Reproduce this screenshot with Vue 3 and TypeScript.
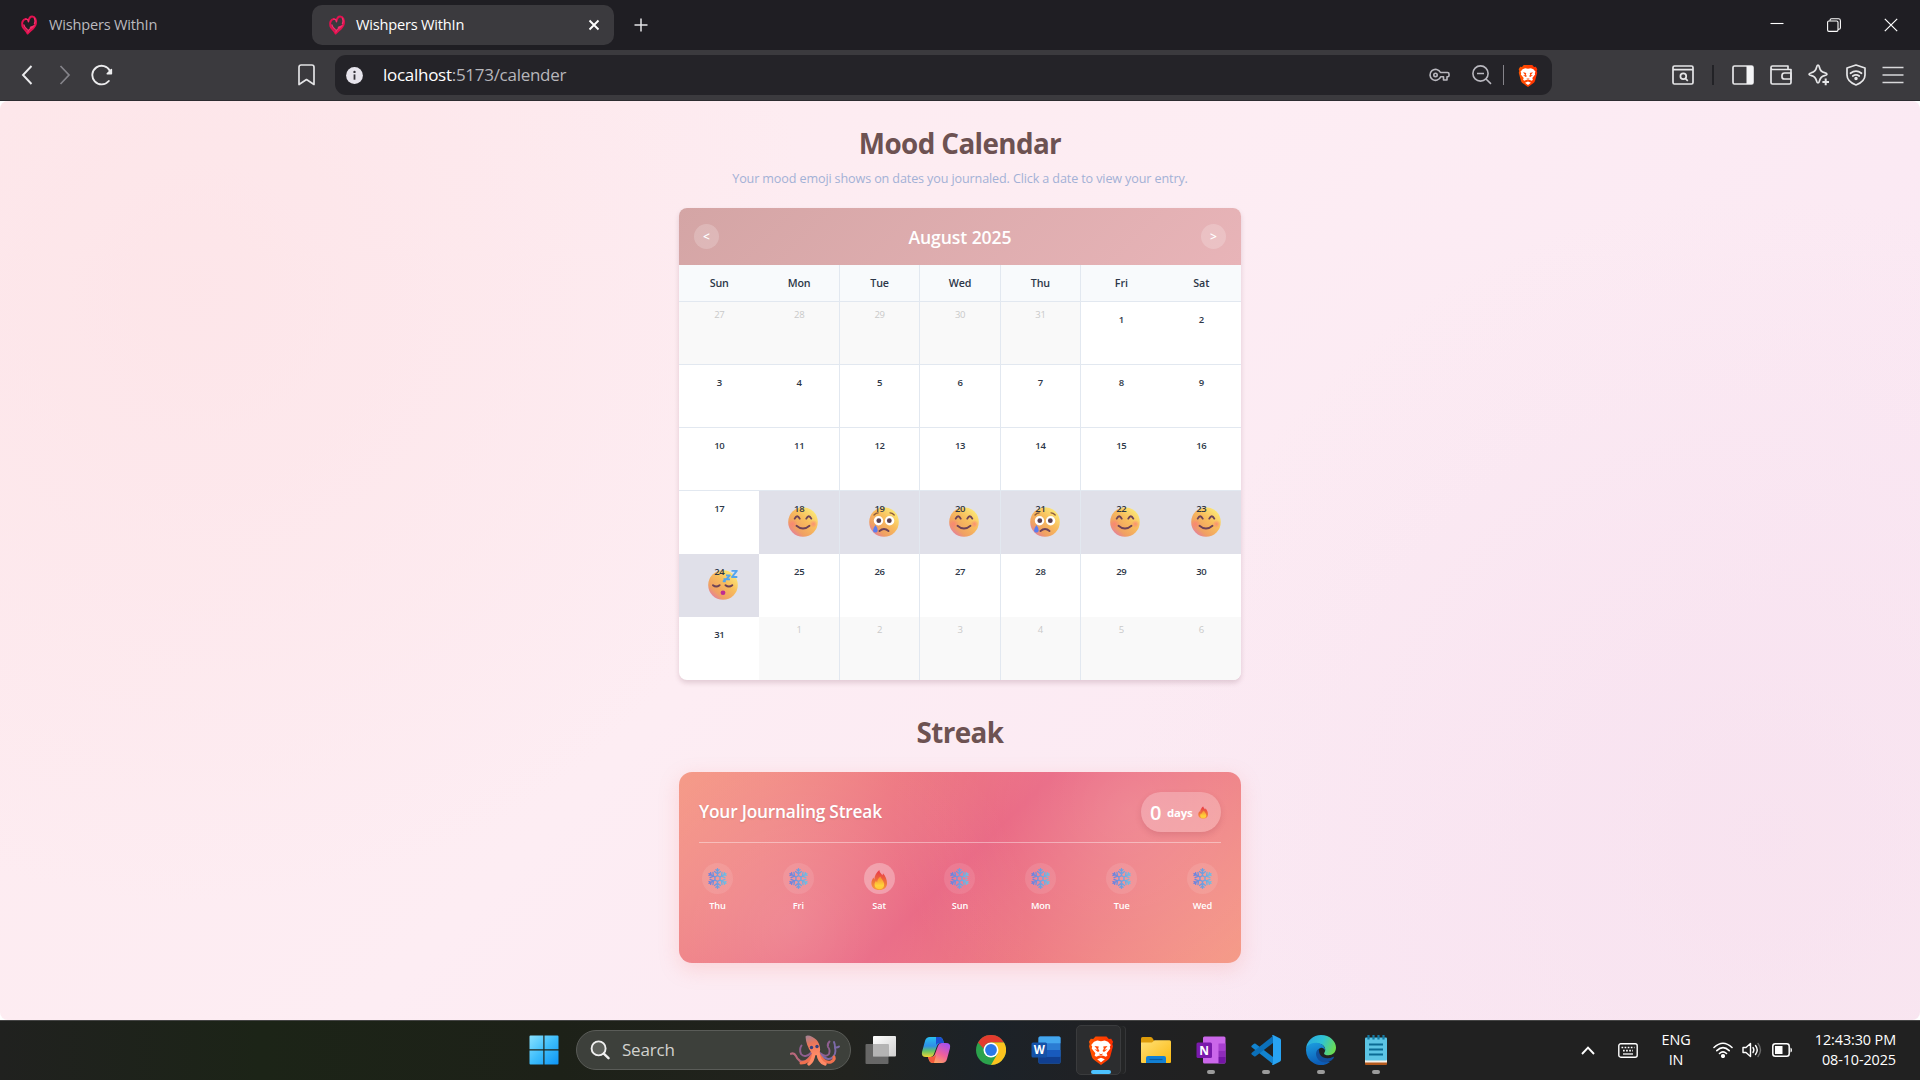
<script setup lang="ts">
interface Day {
  n: number
  muted?: boolean
  mood?: 'happy' | 'sad' | 'sleepy'
}

const weekdays: string[] = ['Sun', 'Mon', 'Tue', 'Wed', 'Thu', 'Fri', 'Sat']

const moods: Record<number, Day['mood']> = {
  18: 'happy',
  19: 'sad',
  20: 'happy',
  21: 'sad',
  22: 'happy',
  23: 'happy',
  24: 'sleepy',
}

const days: Day[] = [
  ...[27, 28, 29, 30, 31].map((n) => ({ n, muted: true })),
  ...Array.from({ length: 31 }, (_, i) => ({ n: i + 1, mood: moods[i + 1] })),
  ...[1, 2, 3, 4, 5, 6].map((n) => ({ n, muted: true })),
]

const weeks: Day[][] = Array.from({ length: 6 }, (_, i) => days.slice(i * 7, i * 7 + 7))

const streak: { label: string; lit: boolean }[] = [
  { label: 'Thu', lit: false },
  { label: 'Fri', lit: false },
  { label: 'Sat', lit: true },
  { label: 'Sun', lit: false },
  { label: 'Mon', lit: false },
  { label: 'Tue', lit: false },
  { label: 'Wed', lit: false },
]

const branches: number[] = [0, 60, 120, 180, 240, 300]
</script>

<template>
  <div class="screen">
    <svg class="defs" width="0" height="0" aria-hidden="true">
      <defs>
        <linearGradient id="face" x1="0.85" y1="0.1" x2="0.15" y2="0.9">
          <stop offset="0" stop-color="#fbe878" />
          <stop offset="0.4" stop-color="#f8bd5c" />
          <stop offset="0.8" stop-color="#f0a063" />
          <stop offset="1" stop-color="#e5809a" />
        </linearGradient>
        <radialGradient id="cheek">
          <stop offset="0" stop-color="#fb7d78" stop-opacity="0.75" />
          <stop offset="1" stop-color="#fb7d78" stop-opacity="0" />
        </radialGradient>
        <linearGradient id="frost" x1="0" y1="0" x2="1" y2="0">
          <stop offset="0.1" stop-color="#6f80dc" />
          <stop offset="0.9" stop-color="#70bde2" />
        </linearGradient>
        <linearGradient id="flameOuter" x1="0.5" y1="0" x2="0.4" y2="1">
          <stop offset="0" stop-color="#e8354a" />
          <stop offset="0.5" stop-color="#ee6a3c" />
          <stop offset="1" stop-color="#f79a3c" />
        </linearGradient>
        <linearGradient id="flameInner" x1="0.5" y1="0" x2="0.5" y2="1">
          <stop offset="0" stop-color="#f78a34" />
          <stop offset="0.7" stop-color="#ffd23a" />
          <stop offset="1" stop-color="#ffc63a" />
        </linearGradient>
        <linearGradient id="braveFill" x1="0" y1="0" x2="1" y2="0">
          <stop offset="0" stop-color="#ff5500" />
          <stop offset="1" stop-color="#ff2e00" />
        </linearGradient>
        <symbol id="heart" viewBox="0 0 18 22">
          <path d="M5.500 4.500C2 5 .8 8.500 1.700 12c.8 3.200 3.800 4 5.800 8.400 2.200-3.400 7.800-5.200 9-10.800.8-4.200-1-8-4-8-2.300 0-3.500 2-4 4.800" fill="none" stroke="#e3104f" stroke-width="2.200" stroke-linecap="round" stroke-linejoin="round" />
          <path d="M5.500 4.500c2-.2 2.900.9 2.900 3M7.600 18.600c2-4.600 5.200-3.600 7-7M3.400 11c.6 3 2.200 3.400 4 5.600M15 3.500c1 2 .8 4 0 6M10.500 13.500l2.500-1" fill="none" stroke="#f2306c" stroke-width="1.500" stroke-linecap="round" />
        </symbol>
        <symbol id="lion" viewBox="0 0 26 30">
          <path d="M7.500 1.400h11l2.300 2.500 2.400-.2 1.900 3-.8 2.300.7 2.300-2.800 10.500q-.6 2-2.400 3.300L13 30l-6.800-4.900q-1.800-1.300-2.400-3.300L1 11.300 1.700 9 .9 6.700l1.900-3 2.400.2z" fill="url(#braveFill)" />
          <path d="M13 6.300l3.700-.8 3.300 1.200 2.800 3.300-1 1.600.5 2-3.700 4.600.8 2.200-1.500 1.300-3.300-1.300-1.600.8-1.600-.8-3.300 1.300-1.500-1.300.8-2.200-3.700-4.600.5-2-1-1.600L6 6.700l3.300-1.200z" fill="#fff" />
          <path d="M13 22.800l3.800 1.500L13 27.300l-3.800-3z" fill="#fff" />
          <path d="M6.500 10.900l4.300.7-.6 2.200 1.300 2.200-1.500 1-3.500-2.800 3 .5zM19.500 10.900l-4.300.7.6 2.200-1.300 2.200 1.500 1 3.500-2.800-3 .5zM10.900 18.400l2.100.8 2.100-.8-2.100 2.800z" fill="#ff4a0c" />
        </symbol>
        <symbol id="flame" viewBox="0 0 16 20">
          <path d="M8.300 0c.3 2.500 2 3.700 3 5.200.5-.6.700-1.300.7-2 2.600 3 4 6.500 4 10 0 4-3 6.800-7.600 6.800C3.500 20 .4 17.300.4 13.200c0-2.500 1.100-4.500 2.300-5.800 0 1 .2 1.500.6 2C3.500 5.800 5.400 2.400 8.300 0z" fill="url(#flameOuter)" />
          <path d="M9.600 6.600c.6 2.900 3.600 4.400 3.600 8 0 3-2 4.700-4.900 4.700s-4.800-1.900-4.800-4.700c0-1.800 1-3.200 1.700-4 .1 1 .4 1.500.9 1.900.2-2.400 1.400-4.800 3.500-5.900z" fill="url(#flameInner)" />
        </symbol>
      </defs>
    </svg>

    <div class="tabstrip">
      <div class="tab"><svg width="18" height="20"><use href="#heart" /></svg><span>Wishpers WithIn</span></div>
      <div class="tab active">
        <svg width="18" height="20"><use href="#heart" /></svg><span>Wishpers WithIn</span>
        <svg class="tab-close" width="12" height="12" viewBox="0 0 12 12"><path d="M1.500 1.500l9 9M10.500 1.500l-9 9" stroke="#fff" stroke-width="1.900" /></svg>
      </div>
      <svg class="plus" width="14" height="14" viewBox="0 0 14 14"><path d="M7 .5v13M.5 7h13" stroke="#e4e4e6" stroke-width="1.500" /></svg>
      <div class="window-buttons">
        <svg width="14" height="14" viewBox="0 0 14 14"><path d="M.5 5.500h13" stroke="#fff" stroke-width="1.100" /></svg>
        <svg width="14" height="14" viewBox="0 0 14 14" fill="none" stroke="#fff" stroke-width="1.100"><rect x=".6" y="3" width="10.400" height="10.400" rx="1.300" /><path d="M3 2.800V2.200Q3 .8 4.500.8h7q1.900 0 1.900 1.900v7q0 1.500-1.500 1.500H11" /></svg>
        <svg width="14" height="14" viewBox="0 0 14 14"><path d="M.8.8l12.400 12.400M13.200.8L.8 13.200" stroke="#fff" stroke-width="1.200" /></svg>
      </div>
    </div>

    <div class="toolbar">
      <div class="nav">
        <svg width="12" height="20" viewBox="0 0 12 20"><path d="M10.500 1L2 10l8.500 9" fill="none" stroke="#ececee" stroke-width="1.900" /></svg>
        <svg width="12" height="20" viewBox="0 0 12 20"><path d="M1.500 1L10 10l-8.500 9" fill="none" stroke="#85848a" stroke-width="1.700" /></svg>
        <svg width="22" height="22" viewBox="0 0 22 22"><path d="M17.800 17A9.300 9.300 0 1 1 19 7" fill="none" stroke="#ececee" stroke-width="1.900" stroke-linecap="round" /><path d="M20.400 5.500v4.200h-4.200z" fill="#ececee" stroke="#ececee" stroke-width="1.500" stroke-linejoin="round" /></svg>
      </div>
      <svg class="bookmark" width="17" height="22" viewBox="0 0 17 22"><path d="M3.200 1h10.600Q16 1 16 3.200V20.500L8.500 15.500 1 20.500V3.200Q1 1 3.200 1z" fill="none" stroke="#e2e2e4" stroke-width="1.700" stroke-linejoin="round" /></svg>
      <div class="address">
        <svg width="17" height="17" viewBox="0 0 17 17"><circle cx="8.500" cy="8.500" r="8.400" fill="#e6e4ec" /><circle cx="8.500" cy="4.900" r="1.200" fill="#35343a" /><path d="M8.500 7.400v5.300" stroke="#35343a" stroke-width="1.800" /></svg>
        <span class="url"><b>localhost</b>:5173/calender</span>
        <div class="address-icons">
          <svg width="21" height="14" viewBox="0 0 21 14" fill="none" stroke="#b9b8bf" stroke-width="1.600" stroke-linejoin="round"><path d="M11.500 4.500H18.500Q20 4.500 20 6v1.500q0 1.200-1.200 1.200H18V12h-3.500V8.700H11.700A5.500 5.500 0 1 1 11.500 4.500z" /><circle cx="6.500" cy="6.900" r="1.700" /></svg>
          <svg width="20" height="20" viewBox="0 0 20 20" fill="none" stroke="#b9b8bf" stroke-width="1.600"><circle cx="8.500" cy="8.500" r="7.600" /><path d="M5 8.500h7M14 14l5 4.800" /></svg>
          <i class="bar"></i>
          <svg width="20" height="23" viewBox="0 0 26 30" preserveAspectRatio="none"><use href="#lion" width="26" height="30" /></svg>
        </div>
      </div>
      <div class="tools">
        <svg width="22" height="20" viewBox="0 0 22 20" fill="none" stroke="#e6e6e8" stroke-width="1.700"><rect x="1" y="1" width="20" height="18" rx="1.500" /><path d="M1 4.600h20M13.500 13.600l2.300 2.200" /><circle cx="11.300" cy="11.200" r="2.900" /></svg>
        <i class="sep"></i>
        <svg width="22" height="20" viewBox="0 0 22 20"><rect x="1" y="1" width="20" height="18" rx="1.500" fill="none" stroke="#e6e6e8" stroke-width="1.700" /><path d="M14.500 1H20q1 0 1 1v16q0 1-1 1h-5.500z" fill="#f4f4f6" /></svg>
        <svg width="22" height="20" viewBox="0 0 22 20" fill="none" stroke="#e6e6e8" stroke-width="1.700" stroke-linejoin="round"><path d="M18 4.500V1H2.500Q1 1 1 2.500v15Q1 19 2.500 19h17q1.500 0 1.500-1.500V4.500H2.500Q1 4.500 1 2.500" /><path d="M21 8h-6.500Q12 8 12 10.500V12q0 2 2.500 2H21z" /></svg>
        <svg width="22" height="22" viewBox="0 0 22 22" fill="none" stroke="#e6e6e8" stroke-width="1.700" stroke-linejoin="round"><path d="M10 1.200Q11 1.200 11.500 3.500 12.500 7.800 16.500 8.700 19 9.300 19 10.200T16.500 11.600Q12.500 12.600 11.500 16.800 11 19 10 19T8.500 16.800Q7.500 12.600 3.500 11.600 1 11 1 10.200T3.500 8.700Q7.500 7.800 8.500 3.500 9 1.200 10 1.200z" /><path d="M17.500 14v8M13.500 18h8" stroke="#3b3a3e" stroke-width="4.500" /><path d="M17.700 14.600v6.600M14.400 17.900H21" stroke-width="2" /></svg>
        <svg width="20" height="22" viewBox="0 0 20 22" fill="none" stroke="#e6e6e8" stroke-width="1.700" stroke-linecap="round" stroke-linejoin="round"><path d="M10 1l9 3v7q0 6.500-9 10Q1 17.500 1 11V4z" /><path d="M4.500 9.300q5.500-4.200 11 0M6.800 12q3.200-2.300 6.400 0" /><circle cx="10" cy="14.500" r=".9" fill="#e6e6e8" /></svg>
        <svg width="22" height="18" viewBox="0 0 22 18"><path d="M.5 1.500h21M.5 9h21M.5 16.500h21" stroke="#d8d8da" stroke-width="1.700" /></svg>
      </div>
    </div>

    <div class="viewport">
      <main class="page">
        <h1>Mood Calendar</h1>
        <p class="hint">Your mood emoji shows on dates you journaled. Click a date to view your entry.</p>

        <section class="calendar">
          <header>
            <button>&lt;</button>
            <h2>August 2025</h2>
            <button>&gt;</button>
          </header>
          <div class="row head">
            <div v-for="d in weekdays" :key="d" class="cell">{{ d }}</div>
          </div>
          <div v-for="(week, w) in weeks" :key="w" class="row" :class="{ lined: w < 3 }">
            <div v-for="(day, i) in week" :key="i" class="cell" :class="{ muted: day.muted, marked: day.mood }">
              <svg v-if="day.mood" class="mood" width="30" height="30" viewBox="0 0 30 30">
                <circle cx="15" cy="15" r="14.800" fill="url(#face)" />
                <g v-if="day.mood === 'happy'">
                  <circle cx="4.500" cy="17" r="5" fill="url(#cheek)" /><circle cx="25.500" cy="17" r="4" fill="url(#cheek)" />
                  <path d="M6.700 11.600q2.500-4.700 5 0M18.300 11.600q2.500-4.700 5 0M8.500 18.800q6.500 5.600 13 0" fill="none" stroke="#6d4257" stroke-width="1.900" stroke-linecap="round" />
                </g>
                <g v-else-if="day.mood === 'sad'">
                  <circle cx="9.500" cy="13.700" r="4.700" fill="#fff" /><circle cx="20.600" cy="13.700" r="4.700" fill="#fff" />
                  <circle cx="9.800" cy="13.700" r="2.400" fill="#5a3f4d" /><circle cx="20.300" cy="13.700" r="2.400" fill="#5a3f4d" />
                  <path d="M5 8q2-2.200 4.200-2.200M21 5.800q2.200 0 4.200 2.200" fill="none" stroke="#8b5a3c" stroke-width="1.300" stroke-linecap="round" />
                  <path d="M10.500 24q4.500-4 9 0" fill="none" stroke="#6d4257" stroke-width="1.900" stroke-linecap="round" />
                  <path d="M6.500 18q2.600 3.500 2.200 5.700a2.400 2.400 0 0 1-4.700 0Q4 21.300 6.500 18z" fill="#5b7df0" />
                </g>
                <g v-else>
                  <path d="M5 15.200q3.200 2.800 6.600 0M17.500 15.200q3.400 2.800 6.800 0" fill="none" stroke="#6d4257" stroke-width="1.900" stroke-linecap="round" />
                  <ellipse cx="15" cy="22.800" rx="2.400" ry="2.200" fill="#bf2c93" />
                  <path d="M23.500.8h5.300l-4.800 6.200h5.300M18 5.400h3.800l-3.600 4h3.800M15.500 9.300h2.300l-2.200 2h2.200" fill="none" stroke="#53a5ee" stroke-width="1.900" stroke-linejoin="round" />
                </g>
              </svg>
              <span>{{ day.n }}</span>
            </div>
          </div>
        </section>

        <h1 class="streak-heading">Streak</h1>

        <section class="streak">
          <div class="streak-top">
            <h3>Your Journaling Streak</h3>
            <div class="badge"><b>0</b><span>days</span><svg width="10" height="13" viewBox="0 0 16 20"><use href="#flame" width="16" height="20" /></svg></div>
          </div>
          <div class="streak-days">
            <div v-for="s in streak" :key="s.label" class="streak-day">
              <div class="disc" :class="{ lit: s.lit }">
                <svg v-if="s.lit" width="16" height="20" viewBox="0 0 16 20"><use href="#flame" width="16" height="20" /></svg>
                <svg v-else width="21" height="21" viewBox="0 0 30 30">
                  <defs>
                    <linearGradient :id="`ice-${s.label}`" x1="0" y1="0" x2="30" y2="0" gradientUnits="userSpaceOnUse">
                      <stop offset="0.1" stop-color="#6f80dc" />
                      <stop offset="0.9" stop-color="#70bde2" />
                    </linearGradient>
                    <mask :id="`flake-${s.label}`" maskUnits="userSpaceOnUse" x="0" y="0" width="30" height="30">
                      <g fill="none" stroke="#fff" stroke-width="1.900" stroke-linecap="round">
                        <path d="M15 10.800l3.600 2.100v4.200L15 19.200l-3.600-2.100v-4.200z" />
                        <path v-for="a in branches" :key="a" :transform="`rotate(${a} 15 15)`" d="M15 10.500V1M15 8.500l-4.200-3.400M15 8.500l4.200-3.400M15 4.500l-2.300-2.200M15 4.500l2.300-2.200" />
                      </g>
                    </mask>
                  </defs>
                  <rect width="30" height="30" :fill="`url(#ice-${s.label})`" :mask="`url(#flake-${s.label})`" />
                </svg>
              </div>
              <span>{{ s.label }}</span>
            </div>
          </div>
        </section>
      </main>
    </div>

    <footer class="taskbar">
      <svg class="start" width="30" height="30" viewBox="0 0 30 30">
        <defs><linearGradient id="win" x1="0" y1="0" x2="30" y2="30" gradientUnits="userSpaceOnUse"><stop offset="0" stop-color="#8ce3ff" /><stop offset="0.5" stop-color="#3dbdfb" /><stop offset="1" stop-color="#0b93f5" /></linearGradient></defs>
        <path d="M.5 1.500Q.5.5 1.500.5H14.300V14.300H.5zM15.500.5h13q1 0 1 1V14.300h-14zM.5 15.500h13.800v14H1.500q-1 0-1-1zM15.500 15.500h14v13q0 1-1 1h-13z" fill="url(#win)" />
      </svg>
      <div class="search">
        <svg width="20" height="20" viewBox="0 0 20 20"><circle cx="8.600" cy="8.400" r="7" fill="#5d605b" stroke="#f0f0f0" stroke-width="1.900" /><path d="M13.800 13.600l4.700 4.600" stroke="#f0f0f0" stroke-width="2.400" stroke-linecap="round" /></svg>
        <span>Search</span>
        <svg class="octopus" width="50" height="31" viewBox="0 0 50 31">
          <defs><linearGradient id="octo" x1="0.3" y1="0" x2="0.6" y2="1"><stop offset="0" stop-color="#a8808f" /><stop offset="0.4" stop-color="#e8765a" /><stop offset="1" stop-color="#ff8a66" /></linearGradient></defs>
          <g fill="none" stroke-linecap="round">
            <path d="M22 19Q16 29 10 26 7 24 6 21 4 17.500 1 18.800" stroke="#b8687c" stroke-width="2.200" />
            <path d="M22 17Q15 24 11 19 9 14 11.500 10.500" stroke="#8f5f90" stroke-width="2" />
            <path d="M30 18q6 5 9 1 1.500-4-1-7-1-3 1.500-5.500" stroke="#8f5f90" stroke-width="1.900" />
            <path d="M30 19q8 8 13 3 3.500-4 2-9 0-4-1-6M46 12.500q2 0 3-1" stroke="#7c6aa8" stroke-width="1.900" />
            <path d="M24 18q-5 10-13 10M28 18q6 11 13 9 4-2 3-5" stroke="#f0704f" stroke-width="3" />
            <path d="M24 18q-1 8-5 11M28 18q1 9 7 11" stroke="#ff8a66" stroke-width="3.400" />
          </g>
          <path d="M15.500 1.500q2-2 7 .5 5 2.500 6.500 7 2.500 7-.5 10.500-4 2-7-1.500Q16 10 15.500 1.500z" fill="url(#octo)" />
          <circle cx="21.500" cy="12.500" r="1.700" fill="#35407e" /><circle cx="27" cy="11.500" r="1.700" fill="#35407e" />
        </svg>
      </div>
      <div class="apps">
        <div class="app"><svg width="31" height="30" viewBox="0 0 31 30"><defs><linearGradient id="tv" x1="0" y1="0" x2="1" y2="1"><stop offset="0" stop-color="#fff" /><stop offset="1" stop-color="#cfcfcf" /></linearGradient></defs><rect x="8" y="1" width="23" height="20.500" rx="1" fill="url(#tv)" /><rect x=".5" y="9" width="23" height="20" rx="1" fill="#767676" fill-opacity="0.82" /><path d="M8 9h15.500v12.500H8z" fill="#b4b4b4" /></svg></div>
        <div class="app"><svg width="30" height="28" viewBox="0 0 30 28">
          <defs><linearGradient id="cpA" x1="0" y1="0" x2="0" y2="1"><stop offset="0" stop-color="#2ac0f0" /><stop offset="0.45" stop-color="#2e8ee8" /><stop offset="0.7" stop-color="#63c265" /><stop offset="1" stop-color="#f3d534" /></linearGradient><linearGradient id="cpB" x1="0.8" y1="0" x2="0.2" y2="1"><stop offset="0" stop-color="#a64ff0" /><stop offset="0.5" stop-color="#f0609a" /><stop offset="1" stop-color="#ffb057" /></linearGradient></defs>
          <path d="M9 1h9q3 0 4 3l1 3h-3q-3 0-4 3l-3 8q-1 3-4 3H5q-5 0-4-5L4 5q1-4 5-4z" fill="url(#cpA)" /><path d="M15 1h3q3 0 4 3l1 3h-4q-3 0-4 2z" fill="#1c4fd4" />
          <path d="M21 27h-9q-3 0-4-3l-1-3h3q3 0 4-3l3-8q1-3 4-3h4q5 0 4 5l-3 11q-1 4-5 4z" fill="url(#cpB)" /><path d="M13 27h-1q-3 0-4-3l-1-3h4q2 0 4-2z" fill="#f35a3c" />
        </svg></div>
        <div class="app"><svg width="30" height="30" viewBox="0 0 30 30">
          <circle cx="15" cy="15" r="15" fill="#2ba24c" />
          <path d="M2 7.500A15 15 0 0 1 28 7.500H15q-6 0-7.500 6z" fill="#e33b2e" /><path d="M15 7.500H28A15 15 0 0 1 15 30L21.500 18.700Q24 12 15 7.500z" fill="#fcc31e" />
          <circle cx="15" cy="15" r="7.500" fill="#fff" /><circle cx="15" cy="15" r="5.900" fill="#2a78e8" />
        </svg></div>
        <div class="app"><svg width="30" height="28" viewBox="0 0 30 28"><rect x="7.500" y=".5" width="22" height="27" rx="1.500" fill="#2b7cd3" /><path d="M7.500 2Q7.500.5 9 .5h19q1.500 0 1.500 1.500v5.300h-22z" fill="#43a6ee" /><path d="M7.500 14h22v6.700h-22z" fill="#185abd" /><path d="M7.500 20.700h22V26q0 1.500-1.500 1.500H9q-1.500 0-1.500-1.500z" fill="#103f91" /><rect x=".5" y="6.500" width="15.500" height="15" rx="1.500" fill="#1552a8" /><text x="8.200" y="18.300" text-anchor="middle" font-family="Open Sans, sans-serif" font-weight="700" font-size="11.500" fill="#fff">W</text></svg></div>
        <div class="app focused"><svg width="26" height="30"><use href="#lion" /></svg><i class="line"></i></div>
        <div class="app"><svg width="30" height="28" viewBox="0 0 30 28"><defs><linearGradient id="fold" x1="0" y1="0" x2="1" y2="1"><stop offset="0" stop-color="#ffe077" /><stop offset="1" stop-color="#fbb90f" /></linearGradient></defs><path d="M0 2.500Q0 1 1.500 1h8q1 0 1.700.8L13 4.500v6H0z" fill="#dd9b0a" /><path d="M0 6.500h11l2.500-2.200H28.500q1.500 0 1.500 1.500V26q0 1-1 1H1q-1 0-1-1z" fill="url(#fold)" /><path d="M5 27v-5q0-2 2-2h16q2 0 2 2v5z" fill="#1280d4" /><path d="M8.500 23.500h13" stroke="#0b5c9f" stroke-width="1.200" /></svg></div>
        <div class="app"><svg width="30" height="28" viewBox="0 0 30 28"><rect x="7" y=".5" width="22.500" height="27" rx="1.500" fill="#cb67ea" /><path d="M22.500 7.500h7v7h-7z" fill="#a83fd0" /><path d="M22.500 14.500h7v6.500h-7z" fill="#8f2cba" /><path d="M22.500 21h7v5q0 1.500-1.500 1.500h-5.500z" fill="#7516a6" /><rect x=".5" y="6.500" width="15.500" height="15.500" rx="1.500" fill="#7a1aac" /><text x="8.200" y="18.500" text-anchor="middle" font-family="Open Sans, sans-serif" font-weight="700" font-size="12" fill="#fff">N</text></svg><i class="dot"></i></div>
        <div class="app"><svg width="30" height="30" viewBox="0 0 30 30"><path d="M.8 10.500L3 8.700q.8-.6 1.600 0L22 22v7L.8 12.300q-.9-.8 0-1.800z" fill="#1284d0" /><path d="M.8 19.500L3 21.300q.8.600 1.600 0L22 8V1L.8 17.700q-.9.8 0 1.800z" fill="#0b70ba" /><path d="M21 .3q.8-.5 1.700 0l6 2.900Q30 3.800 30 5.200v19.600q0 1.400-1.300 2l-6 2.900q-.9.500-1.700 0l1-1.700V2z" fill="#28a3f2" /></svg><i class="dot"></i></div>
        <div class="app"><svg width="30" height="30" viewBox="0 0 30 30"><defs><linearGradient id="edA" x1="0" y1="0.3" x2="1" y2="0.6"><stop offset="0" stop-color="#2aa9e0" /><stop offset="0.5" stop-color="#2fc3d4" /><stop offset="1" stop-color="#6ddd4e" /></linearGradient><linearGradient id="edB" x1="0" y1="0" x2="0.3" y2="1"><stop offset="0" stop-color="#1c9fe0" /><stop offset="1" stop-color="#0c5db8" /></linearGradient></defs><path d="M0 14A15 15 0 0 1 15 0C24 0 30 6.500 30 12.500c0 5-3.500 7.700-7.500 7.700-3.500 0-5.300-1.200-4-2.800C21 13 17 8.500 11.500 8.500 5.500 8.500 1 11.500 0 14z" fill="url(#edA)" /><path d="M0 15C0 10.500 5 7.500 10.500 7.800 16 8 19.500 12 19 15.500c-.7-2-2.500-3-4.500-2.500-4 1.500-4.500 7-1 10.500 3 3 7 4 10.500 3.500A15 15 0 0 1 0 15z" fill="url(#edB)" /><path d="M12.500 13.800C8 17 10 25 16 27c5 1.500 10-1 11.800-4.300.3-.8-.3-1-.9-.7-5 2.500-11 1.200-13-2.800-1-2-.8-4.200-1.400-5.400z" fill="#124f9c" /></svg><i class="dot"></i></div>
        <div class="app"><svg width="22" height="30" viewBox="0 0 22 30"><rect x="0" y="25" width="22" height="5" rx="1" fill="#b4591c" /><rect x="0" y="24" width="22" height="3.500" fill="#f2f0ea" /><rect x="0" y="2.500" width="22" height="23" rx="1" fill="#5cc4e4" /><path d="M4 9.500h14M4 14.500h14M4 19.500h14" stroke="#0b6b94" stroke-width="1.800" /><path d="M3.500 0v4.500M8.500 0v4.500M13.500 0v4.500M18.500 0v4.500" stroke="#147aa3" stroke-width="2.200" /></svg><i class="dot"></i></div>
      </div>
      <div class="tray">
        <svg class="chev" width="14" height="9" viewBox="0 0 14 9"><path d="M1 8l6-6.300L13 8" fill="none" stroke="#fff" stroke-width="1.900" /></svg>
        <svg class="keys" width="20" height="15" viewBox="0 0 20 15"><rect x=".8" y=".8" width="18.400" height="13.400" rx="2" fill="none" stroke="#fff" stroke-width="1.400" /><path d="M3.500 4.500h13M5 7.700h10" stroke="#fff" stroke-width="1.700" stroke-dasharray="1.700 1.400" /><path d="M5 11h10" stroke="#fff" stroke-width="1.300" /></svg>
        <div class="lang"><span>ENG</span><span>IN</span></div>
        <div class="status">
          <svg width="20" height="16" viewBox="0 0 20 16" fill="none" stroke="#fff" stroke-width="1.600" stroke-linecap="round"><path d="M1 5.500q9-8.500 18 0M3.800 8.600q6.200-5.800 12.400 0M6.500 11.500q3.500-3.200 7 0" /><circle cx="10" cy="14" r="1.300" fill="#fff" /></svg>
          <svg width="21" height="16" viewBox="0 0 21 16" fill="none" stroke="#fff" stroke-width="1.400" stroke-linecap="round" stroke-linejoin="round"><path d="M1 5.500h3L8.500 1.500v13L4 10.500H1z" /><path d="M11 5.500q1.800 2.500 0 5M13.500 3.500q3.500 4.500 0 9" /><path d="M16 1.500q5 6.500 0 13" stroke="#686868" /></svg>
          <svg width="21" height="14" viewBox="0 0 21 14"><rect x=".8" y=".8" width="16.400" height="12.400" rx="2.500" fill="none" stroke="#fff" stroke-width="1.500" /><rect x="3" y="3" width="7.500" height="8" fill="#fff" /><path d="M18.500 4.500q1.500.5 1.500 2.500t-1.500 2.500z" fill="#fff" /></svg>
        </div>
        <div class="clock"><span>12:43:30 PM</span><span>08-10-2025</span></div>
      </div>
    </footer>
  </div>
</template>

<style>
body {
  margin: 0;
  overflow: hidden;
}
</style>

<style scoped>
* {
  box-sizing: border-box;
}
.screen {
  width: 1920px;
  height: 1080px;
  display: flex;
  flex-direction: column;
  overflow: hidden;
  background: #fff;
  font-family: 'Open Sans', 'Noto Sans', sans-serif;
}
.defs {
  position: absolute;
}
svg {
  display: block;
  flex: none;
}

/* browser chrome */
.tabstrip {
  height: 50px;
  flex: none;
  display: flex;
  align-items: center;
  background: #1f1e23;
}
.tab {
  width: 312px;
  height: 40px;
  display: flex;
  align-items: center;
  padding-left: 20px;
  gap: 11px;
  color: #bbbabf;
  font-size: 14.6px;
  letter-spacing: -0.2px;
  white-space: nowrap;
}
.tab span {
  padding-bottom: 2px;
}
.tab.active {
  width: 302px;
  padding-left: 16px;
  padding-right: 14px;
  gap: 10px;
  border-radius: 10px;
  background: #3b3a3e;
  color: #fff;
}
.tab-close {
  margin-left: auto;
}
.plus {
  margin-left: 20px;
}
.window-buttons {
  margin-left: auto;
  display: flex;
  gap: 43px;
  padding-right: 22px;
}
.toolbar {
  height: 51px;
  flex: none;
  display: flex;
  align-items: center;
  background: #3b3a3e;
  border-bottom: 1px solid #2c2c30;
}
.nav {
  display: flex;
  align-items: center;
  gap: 26px;
  padding-left: 21px;
  width: 298px;
}
.nav svg:last-child {
  margin-left: -6px;
}
.bookmark {
  margin-right: 20px;
}
.address {
  width: 1217px;
  height: 40px;
  display: flex;
  align-items: center;
  padding: 0 14px 0 11px;
  border-radius: 11px;
  background: #242328;
}
.url {
  margin-left: 20px;
  padding-bottom: 2px;
  font-size: 17px;
  color: #b7b6bb;
  letter-spacing: -0.28px;
}
.url b {
  font-weight: 400;
  color: #fff;
}
.address-icons {
  margin-left: auto;
  display: flex;
  align-items: center;
}
.address-icons svg:nth-child(2) {
  margin-left: 22px;
}
.bar {
  width: 1px;
  height: 20px;
  margin: 0 14px 0 11px;
  background: #85848a;
}
.tools {
  display: flex;
  align-items: center;
  margin-left: auto;
  gap: 16px;
  padding-right: 16px;
}
.sep {
  width: 2px;
  height: 20px;
  margin: 0 2px;
  background: #222226;
}

/* page */
.viewport {
  height: 919px;
  flex: none;
  border-radius: 8px;
  background:
    radial-gradient(circle 620px at 10% 20%, rgba(253, 222, 224, 0.42), transparent),
    radial-gradient(circle 640px at 92% 80%, rgba(245, 220, 236, 0.45), transparent),
    linear-gradient(135deg, #fdeaee 0%, #fdedf3 45%, #fae8f3 80%, #fae9f2 100%);
}
.page {
  width: 562px;
  margin: 0 auto;
  display: flex;
  flex-direction: column;
}
h1 {
  height: 40px;
  line-height: 40px;
  margin: 22px 0 0;
  text-align: center;
  font-size: 27.8px;
  letter-spacing: -0.6px;
  font-weight: 700;
  color: #6d5252;
}
.hint {
  margin: 5px 0 19px;
  height: 21px;
  line-height: 21px;
  text-align: center;
  font-size: 12.6px;
  letter-spacing: -0.13px;
  color: #a3b1d6;
  white-space: nowrap;
}
.calendar {
  border-radius: 8px;
  overflow: hidden;
  background: #fff;
  box-shadow: 0 3px 5px rgba(120, 70, 90, 0.2);
}
.calendar header {
  height: 57px;
  display: flex;
  align-items: center;
  justify-content: space-between;
  padding: 0 15px;
  background: linear-gradient(135deg, #d4a5a5, #e8b4b8);
}
.calendar button {
  width: 25px;
  height: 25px;
  padding: 0;
  border: 0;
  border-radius: 50%;
  background: rgba(255, 255, 255, 0.2);
  color: #fff;
  font: 600 12px 'Open Sans', sans-serif;
}
h2 {
  margin: 0;
  font-size: 17.6px;
  letter-spacing: -0.1px;
  font-weight: 600;
  color: #fff;
}
.row {
  display: grid;
  grid-template-columns: repeat(6, 80.43px) 1fr;
  height: 63px;
}
.row.head {
  height: 37px;
  background: #f8fafc;
  border-bottom: 1px solid #e2e8f0;
}
.row.head .cell {
  align-items: center;
  padding: 0;
  font-size: 10.7px;
  letter-spacing: -0.1px;
}
.row.lined {
  border-bottom: 1px solid #e2e8f0;
}
.cell {
  position: relative;
  display: flex;
  justify-content: center;
  align-items: flex-start;
  padding-top: 11px;
  line-height: 14px;
  font-size: 9.5px;
  letter-spacing: -0.35px;
  font-weight: 600;
  color: #2d3748;
}
.cell:nth-child(n + 2):nth-child(-n + 5) {
  border-right: 1px solid #e2e8f0;
}
.cell.muted {
  padding-top: 6px;
  background: #f9f9f9;
  color: #c9c9c9;
  font-weight: 400;
}
.cell.marked {
  background: #e0e0e9;
}
.cell span {
  position: relative;
}
.mood {
  position: absolute;
  left: 29px;
  top: 16px;
}
.streak-heading {
  margin: 32px 0 20px;
}
.streak {
  height: 191px;
  padding: 20px;
  border-radius: 13px;
  box-shadow: 0 6px 20px rgba(247, 140, 130, 0.25);
  background:
    radial-gradient(circle at 20% 80%, rgba(255, 255, 255, 0.17) 0%, transparent 50%),
    radial-gradient(circle at 80% 20%, rgba(255, 255, 255, 0.17) 0%, transparent 50%),
    linear-gradient(135deg, #f59884 0%, #e85f7c 50%, #f59884 100%);
}
.streak-top {
  height: 51px;
  display: flex;
  justify-content: space-between;
  align-items: flex-start;
  border-bottom: 1px solid rgba(255, 255, 255, 0.4);
}
h3 {
  margin: 0;
  line-height: 39px;
  font-size: 17.3px;
  letter-spacing: -0.2px;
  font-weight: 600;
  color: #fff;
  text-shadow: 0 1px 2px rgba(0, 0, 0, 0.12);
}
.badge {
  width: 80px;
  height: 40px;
  display: flex;
  align-items: center;
  padding-left: 9px;
  border-radius: 20px;
  background: rgba(255, 255, 255, 0.23);
  box-shadow: 0 3px 6px rgba(120, 30, 50, 0.15);
  color: #fff;
}
.badge b {
  width: 12px;
  font-size: 20px;
  font-weight: 600;
}
.badge span {
  margin: 0 6px 0 5px;
  font-size: 11.4px;
  letter-spacing: -0.2px;
  font-weight: 700;
}
.streak-days {
  display: flex;
  justify-content: space-between;
  padding-top: 20px;
}
.streak-day {
  width: 37px;
  display: flex;
  flex-direction: column;
  align-items: center;
  color: #fff;
  font-size: 9.2px;
  letter-spacing: -0.1px;
  font-weight: 600;
  line-height: 12px;
}
.streak-day span {
  margin-top: 6px;
}
.disc {
  width: 31px;
  height: 31px;
  border-radius: 50%;
  display: flex;
  align-items: center;
  justify-content: center;
  background: rgba(255, 255, 255, 0.1);
}
.disc.lit {
  background: rgba(255, 255, 255, 0.3);
}
.disc.lit svg {
  margin-top: 3px;
}

/* taskbar */
.taskbar {
  height: 60px;
  flex: none;
  display: flex;
  align-items: center;
  padding-bottom: 1px;
  border-top: 1px solid #454545;
  background: linear-gradient(90deg, #20211f 0, #1c2417 260px, #1d2118 560px, #22231f 850px, #1c2228 990px, #202124 1100px, #212121 1200px);
}
.start {
  margin-left: 529px;
}
.search {
  width: 275px;
  height: 40px;
  margin-left: 17px;
  display: flex;
  align-items: center;
  padding: 0 10px 0 13px;
  border-radius: 20px;
  border: 1px solid #5a5c58;
  background: #3d403b;
  color: #d2d2cf;
  font-size: 17px;
  letter-spacing: -0.2px;
}
.search span {
  margin-left: 12px;
  padding-bottom: 1px;
}
.octopus {
  margin-left: auto;
}
.apps {
  margin-left: 2px;
  display: flex;
}
.app {
  position: relative;
  width: 55px;
  height: 50px;
  display: flex;
  align-items: center;
  justify-content: center;
}
.app.focused::before {
  content: '';
  position: absolute;
  inset: 0 7px 0 3px;
  z-index: 0;
  border-radius: 5px;
  border: 1px solid #3a3b3d;
  background: #2c2d2f;
  box-shadow: 5px 0 0 -1px #242526, 6px 0 0 -1px #353638;
}
.app svg {
  position: relative;
}
.dot,
.line {
  position: absolute;
  bottom: 1px;
  left: 50%;
  width: 8px;
  height: 4px;
  margin-left: -4px;
  border-radius: 2px;
  background: #9b9b9b;
}
.line {
  width: 20px;
  margin-left: -10px;
  background: #4cc2ff;
}
.tray {
  margin-left: auto;
  display: flex;
  align-items: center;
  padding-right: 24px;
  color: #fff;
  font-size: 14.4px;
  letter-spacing: -0.1px;
  line-height: 20px;
}
.lang,
.clock {
  padding-bottom: 1px;
}
.keys {
  margin-left: 23px;
}
.lang {
  width: 40px;
  margin-left: 18px;
  display: flex;
  flex-direction: column;
  align-items: center;
}
.status {
  display: flex;
  align-items: center;
  gap: 9px;
  margin-left: 17px;
}
.clock {
  width: 103px;
  display: flex;
  flex-direction: column;
  align-items: flex-end;
  white-space: nowrap;
}
</style>
